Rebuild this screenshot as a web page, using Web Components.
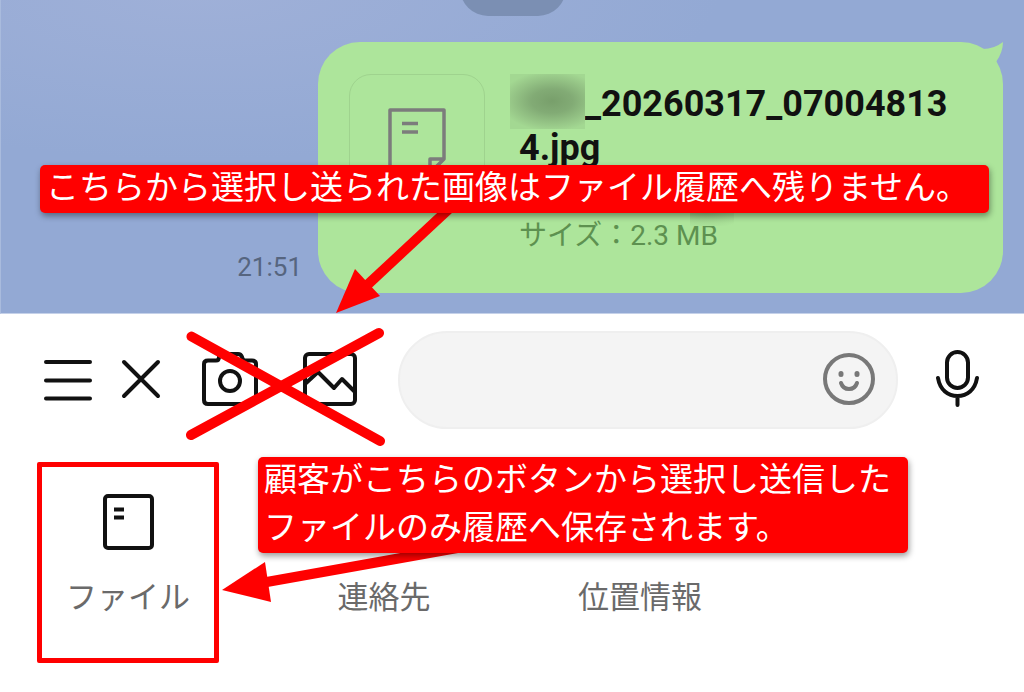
<!DOCTYPE html>
<html lang="ja">
<head>
<meta charset="utf-8">
<meta name="viewport" content="width=device-width, initial-scale=1">
<title>ファイル送信の手順</title>
<style>
html, body { margin: 0; background: #fff; }
body { font-family: Roboto, "Noto Sans CJK JP", sans-serif; color: #111; overflow-x: hidden; }
</style>
</head>
<body>
<guide-page></guide-page>
<script>
class Base extends HTMLElement {
  constructor() {
    super();
    const t = document.createElement('template');
    t.innerHTML = this.constructor.html;
    this.attachShadow({ mode: 'open' }).append(t.content.cloneNode(true));
  }
}

class ChatBubble extends Base {
  static html = `
<style>
:host { display: flex; position: relative; flex: 1; box-sizing: border-box; height: 251px; padding: 32px 40px 0 31px; gap: 34px; background: #ade59b; border-radius: 42px; }
.tail { position: absolute; right: 0; top: 0; display: block; }
.thumb { flex: none; box-sizing: border-box; width: 136px; height: 136px; border: 1px solid #9fd38e; border-radius: 22px; padding: 33px 38px; }
.thumb svg { display: block; }
.text { flex: 1; padding-top: 8px; min-width: 0; }
.name { font-size: 36px; font-weight: 700; line-height: 44px; word-break: break-all; }
.mask { display: inline-block; position: relative; width: 66px; height: 20px; }
.mask::before { content: ""; position: absolute; right: 0; bottom: -13px; width: 75px; height: 55px; background: radial-gradient(ellipse 52px 30px at 42px 27px, #789f6b 0, #82ab75 40%, #9bcc8b 85%, #a3d892 100%); }
.size { position: relative; margin-top: 48px; font-size: 28px; line-height: 36px; color: #5d9150; }
.size::after { content: ""; position: absolute; left: 145px; top: -6px; width: 70px; height: 14px; background: radial-gradient(ellipse 44px 16px at 42px 0, #94c685, #ade59b); clip-path: inset(0 0 0 26px); }
</style>
<svg class="tail" width="42" height="42" viewBox="0 0 42 42" aria-hidden="true"><path fill="#ade59b" d="M22 7Q33 7 42 0Q42 10 35 20L22 20Z"/></svg>
<div class="thumb"><svg width="58" height="68" viewBox="0 0 58 68" fill="none" stroke="#7c7c7c" stroke-width="3.500" stroke-linejoin="round" aria-hidden="true"><path d="M2 2H56V51L42 65H2ZM42 65V51H56M14 15.500H30M14 24H30"/></svg></div>
<div class="text"><div class="name"><span class="mask"></span><slot></slot></div><div class="size"><slot name="size"></slot></div></div>`;
}
customElements.define('chat-bubble', ChatBubble);

class ChatArea extends Base {
  static html = `
<style>
:host { display: flex; flex-direction: column; box-sizing: border-box; height: 314px; overflow: hidden; border-left: 1px solid #a9bbdd; border-bottom: 1px solid #c5d1e9;
 background: radial-gradient(ellipse 520px 170px at 200px -10px, #9fb0d8, rgba(159,176,216,0)), #93a9d4; }
.pill { flex: none; align-self: center; width: 106px; height: 56px; margin-top: -40px; border-radius: 28px; background: #7b8fb3; }
.row { display: flex; align-items: flex-end; gap: 16px; margin: 26px 21px 0 0; }
time { flex: none; width: 301px; text-align: right; font-size: 26px; line-height: 32px; margin-bottom: 10px; color: #56657f; }
</style>
<div class="pill"></div>
<div class="row"><time>21:51</time><chat-bubble>_20260317_070048134.jpg<span slot="size">サイズ：2.3 MB</span></chat-bubble></div>`;
}
customElements.define('chat-area', ChatArea);

class InputBar extends Base {
  static html = `
<style>
:host { display: flex; align-items: center; padding: 17px 44px 18px; }
button { flex: none; display: block; border: 0; padding: 0; background: none; cursor: pointer; }
svg { display: block; fill: none; stroke: #111; stroke-width: 4; stroke-linecap: round; stroke-linejoin: round; }
.x { margin-left: 28px; } .cam { margin-left: 40px; } .pic { margin: 0 40px 0 44px; }
.field { flex: 1; min-width: 0; display: flex; align-items: center; box-sizing: border-box; height: 98px; padding: 0 21px 0 40px; border: 2px solid #efefef; border-radius: 49px; background: #f4f4f4; margin-right: 38px; }
input { flex: 1; min-width: 0; border: 0; outline: 0; background: none; font: inherit; font-size: 31px; }
.field svg { stroke: #787878; }
</style>
<button aria-label="メニュー"><svg width="48" height="56" viewBox="0 0 48 56"><path d="M2 10H46M2 28.500H46M2 46.500H46"/></svg></button>
<button class="x" aria-label="閉じる"><svg width="42" height="56" viewBox="0 0 42 56"><path d="M4 10L38 44M38 10L4 44"/></svg></button>
<button class="cam" aria-label="カメラ"><svg width="56" height="56" viewBox="0 0 56 56"><path d="M6 8.500H14Q17 8.500 17 5Q17 2 20 2H36Q39 2 40 5Q41 8.500 43 8.500H50Q54 8.500 54 12V48Q54 52 50 52H6Q2 52 2 48V12Q2 8.500 6 8.500Z"/><circle cx="28" cy="29" r="10"/></svg></button>
<button class="pic" aria-label="画像"><svg width="56" height="56" viewBox="0 0 56 56"><rect x="3" y="2" width="50" height="50" rx="4"/><path d="M3 32L16 20L32 36L40 27L53 40"/></svg></button>
<div class="field"><input type="text" aria-label="メッセージ"><button aria-label="スタンプ"><svg width="52" height="54" viewBox="0 0 52 54"><circle cx="26" cy="26" r="24"/><path d="M18 30Q20 36 26 36Q32 36 34 30"/><path stroke-width="5" d="M18 20.500V21.500M34 20.500V21.500"/></svg></button></div>
<button aria-label="音声"><svg width="44" height="60" viewBox="0 0 44 60"><rect x="11" y="2" width="21" height="36" rx="10.500"/><path d="M2 28C4 40 12 46 21.500 46S39 40 41 28M21.500 46V55"/></svg></button>`;
}
customElements.define('input-bar', InputBar);

class AttachTile extends Base {
  static html = `
<style>
:host { display: flex; justify-content: center; }
button { box-sizing: border-box; width: 182px; height: 201px; padding: 27px 0 0; border: 5px solid transparent; background: none; display: flex; flex-direction: column; align-items: center; gap: 25px; font: 31px/46px Roboto, "Noto Sans CJK JP", sans-serif; color: #6a6a6a; cursor: pointer; }
:host([marked]) button { border-color: #f00; border-radius: 2px; }
.icon { height: 56px; }
</style>
<button><span class="icon"><slot name="icon"></slot></span><span><slot></slot></span></button>`;
}
customElements.define('attach-tile', AttachTile);

class AttachPanel extends Base {
  static html = `
<style>
:host { display: grid; grid-template-columns: repeat(4, 1fr); padding: 15px 0 28px; }
svg { display: block; }
</style>
<attach-tile marked><svg slot="icon" width="52" height="56" viewBox="0 0 52 56" fill="none" stroke="#111" stroke-width="4" aria-hidden="true"><rect x="3" y="2" width="47" height="52" rx="3"/><path d="M12 15.500H22M12 23.500H22"/></svg>ファイル</attach-tile>
<attach-tile>連絡先</attach-tile>
<attach-tile>位置情報</attach-tile>`;
}
customElements.define('attach-panel', AttachPanel);

class NoteBox extends Base {
  static html = `
<style>
:host { display: block; box-sizing: border-box; padding: 0 6px; border-radius: 5px; background: #f00; color: #fff; font-size: 33px; line-height: 48px; white-space: nowrap; box-shadow: 1px 3px 6px rgba(0,0,0,.4); }
p { margin: -1px 0 1px; }
</style>
<p><slot></slot></p>`;
}
customElements.define('note-box', NoteBox);

class GuidePage extends Base {
  static html = `
<style>
:host { display: block; position: relative; }
svg, note-box { position: absolute; }
svg { pointer-events: none; fill: #f00; stroke: #f00; overflow: visible; }
.a1 { left: 336px; top: 190px; }
.a2 { left: 222px; top: 530px; }
.cross { left: 186px; top: 328px; }
.n1 { left: 40px; top: 165px; width: 949px; }
.n2 { left: 258px; top: 457px; width: 650px; }
</style>
<chat-area></chat-area>
<input-bar></input-bar>
<attach-panel></attach-panel>
<svg class="cross" width="200" height="118" viewBox="0 0 200 118" aria-hidden="true"><path d="M5.500 8.500L194 113M5 107L193 5" stroke-width="10" stroke-linecap="round"/></svg>
<svg class="a1" width="134" height="124" viewBox="0 0 134 124" aria-hidden="true"><path d="M28 98L130 3" stroke-width="10"/><path stroke="none" d="M0 123L19 79L44 106Z"/></svg>
<svg class="a2" width="280" height="74" viewBox="0 0 280 74" aria-hidden="true"><path d="M42 52.500L280 10" stroke-width="10"/><path stroke="none" d="M0 60L43 32L49 72Z"/></svg>
<note-box class="n1">こちらから選択し送られた画像はファイル履歴へ残りません。</note-box>
<note-box class="n2">顧客がこちらのボタンから選択し送信した<br>ファイルのみ履歴へ保存されます。</note-box>`;
}
customElements.define('guide-page', GuidePage);
</script>
</body>
</html>
